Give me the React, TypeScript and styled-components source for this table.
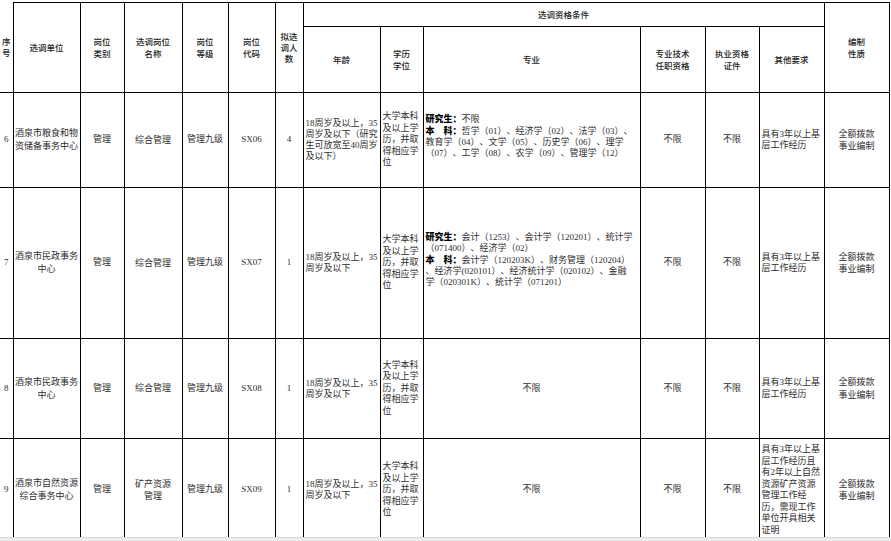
import React from "react";
import styled, { createGlobalStyle } from "styled-components";

const Global = createGlobalStyle`
  html, body { margin: 0; padding: 0; background: #fff; }
  #root { width: 891px; height: 541px; }
`;

const Page = styled.div`
  width: 891px;
  height: 541px;
  display: flex;
  flex-direction: column;
  overflow: hidden;
  background: #fff;
`;

const Viewport = styled.div`
  flex: 1;
  overflow: hidden;
  padding-top: 2px;
`;

const BottomBar = styled.div`
  height: 3px;
  flex: none;
  background: #ececec;
  border-top: 1px solid #d9d9d9;
`;

const Table = styled.table`
  border-collapse: collapse;
  table-layout: fixed;
  width: 889px;
`;

const Col = styled.col<{ $w: number }>`
  width: ${(p) => p.$w}px;
`;

const Row = styled.tr<{ $h: number }>`
  height: ${(p) => p.$h}px;
`;

const HeadCell = styled.th<{ $edge?: boolean }>`
  border: 1px solid #000;
  ${(p) => (p.$edge ? "border-left: none; border-top: none;" : "")}
  padding: 0;
  font-family: "Noto Sans CJK SC", "Noto Sans", sans-serif;
  font-weight: 500;
  font-size: 8.5px;
  line-height: 11.3px;
  color: #222;
  text-align: center;
  vertical-align: middle;
  white-space: nowrap;
  overflow: hidden;
`;

const Cell = styled.td<{ $align?: "left" | "center"; $edge?: boolean; $lh?: number; $pb?: number }>`
  border: 1px solid #000;
  ${(p) => (p.$edge ? "border-left: none;" : "")}
  padding: ${(p) => (p.$align === "left" ? "0 1px 0 2px" : "0")};
  padding-bottom: ${(p) => p.$pb ?? 0}px;
  font-family: "Liberation Serif", "Noto Sans CJK SC", serif;
  font-size: 9px;
  line-height: ${(p) => p.$lh ?? 11.4}px;
  color: #2e2e2e;
  text-align: ${(p) => p.$align ?? "center"};
  vertical-align: middle;
  white-space: nowrap;
  overflow: hidden;
  text-spacing-trim: space-all;
`;

const Label = styled.b`
  font-family: "Noto Sans CJK SC", sans-serif;
  font-weight: 900;
  color: #000;
`;

const Lines: React.FC<{ lines: React.ReactNode[] }> = ({ lines }) => (
  <>
    {lines.map((l, i) => (
      <React.Fragment key={i}>
        {i > 0 && <br />}
        {l}
      </React.Fragment>
    ))}
  </>
);

type DataRow = {
  no: string;
  unit: string[];
  type: string;
  name: string[];
  level: string;
  code: string;
  count: string;
  age: string[];
  edu: string[];
  major: React.ReactNode[] | null;
  other: string[];
  h: number;
};

const edu = ["大学本科", "及以上学", "历，并取", "得相应学", "位"];
const ageStd = ["18周岁及以上，35", "周岁及以下"];
const exp = ["具有3年以上基", "层工作经历"];

const rows: DataRow[] = [
  {
    no: "6",
    unit: ["酒泉市粮食和物", "资储备事务中心"],
    type: "管理",
    name: ["综合管理"],
    level: "管理九级",
    code: "SX06",
    count: "4",
    age: ["18周岁及以上，35", "周岁及以下（研究", "生可放宽至40周岁", "及以下）"],
    edu,
    major: [
      <><Label>研究生：</Label>不限</>,
      <><Label>本　科：</Label>哲学（01）、经济学（02）、法学（03）、</>,
      "教育学（04）、文学（05）、历史学（06）、理学",
      "（07）、工学（08）、农学（09）、管理学（12）",
    ],
    other: exp,
    h: 95,
  },
  {
    no: "7",
    unit: ["酒泉市民政事务", "中心"],
    type: "管理",
    name: ["综合管理"],
    level: "管理九级",
    code: "SX07",
    count: "1",
    age: ageStd,
    edu,
    major: [
      <><Label>研究生：</Label>会计（1253）、会计学（120201）、统计学</>,
      "（071400）、经济学（02）",
      <><Label>本　科：</Label>会计学（120203K）、财务管理（120204）</>,
      "、经济学(020101）、经济统计学（020102）、金融",
      "学（020301K）、统计学（071201）",
    ],
    other: exp,
    h: 151,
  },
  {
    no: "8",
    unit: ["酒泉市民政事务", "中心"],
    type: "管理",
    name: ["综合管理"],
    level: "管理九级",
    code: "SX08",
    count: "1",
    age: ageStd,
    edu,
    major: null,
    other: exp,
    h: 100,
  },
  {
    no: "9",
    unit: ["酒泉市自然资源", "综合事务中心"],
    type: "管理",
    name: ["矿产资源", "管理"],
    level: "管理九级",
    code: "SX09",
    count: "1",
    age: ageStd,
    edu,
    major: null,
    other: [
      "具有3年以上基",
      "层工作经历且",
      "有2年以上自然",
      "资源矿产资源",
      "管理工作经",
      "历，需现工作",
      "单位开具相关",
      "证明",
    ],
    h: 103,
  },
];

const widths = [13, 67, 44, 58, 46, 47, 28, 77, 43, 217, 65, 54, 65, 65];

export default function App() {
  return (
    <Page>
      <Global />
      <Viewport>
        <Table>
          <colgroup>
            {widths.map((w, i) => (
              <Col key={i} $w={w} />
            ))}
          </colgroup>
          <thead>
            <Row $h={24}>
              <HeadCell rowSpan={2} $edge>
                <Lines lines={["序", "号"]} />
              </HeadCell>
              <HeadCell rowSpan={2}>选调单位</HeadCell>
              <HeadCell rowSpan={2}>
                <Lines lines={["岗位", "类别"]} />
              </HeadCell>
              <HeadCell rowSpan={2}>
                <Lines lines={["选调岗位", "名称"]} />
              </HeadCell>
              <HeadCell rowSpan={2}>
                <Lines lines={["岗位", "等级"]} />
              </HeadCell>
              <HeadCell rowSpan={2}>
                <Lines lines={["岗位", "代码"]} />
              </HeadCell>
              <HeadCell rowSpan={2}>
                <Lines lines={["拟选", "调人", "数"]} />
              </HeadCell>
              <HeadCell colSpan={6}>选调资格条件</HeadCell>
              <HeadCell rowSpan={2}>
                <Lines lines={["编制", "性质"]} />
              </HeadCell>
            </Row>
            <Row $h={66}>
              <HeadCell>年龄</HeadCell>
              <HeadCell>
                <Lines lines={["学历", "学位"]} />
              </HeadCell>
              <HeadCell>专业</HeadCell>
              <HeadCell>
                <Lines lines={["专业技术", "任职资格"]} />
              </HeadCell>
              <HeadCell>
                <Lines lines={["执业资格", "证件"]} />
              </HeadCell>
              <HeadCell>其他要求</HeadCell>
            </Row>
          </thead>
          <tbody>
            {rows.map((r) => (
              <Row key={r.no} $h={r.h}>
                <Cell $edge>{r.no}</Cell>
                <Cell $lh={12.6}>
                  <Lines lines={r.unit} />
                </Cell>
                <Cell>{r.type}</Cell>
                <Cell $lh={12.4}>
                  <Lines lines={r.name} />
                </Cell>
                <Cell>{r.level}</Cell>
                <Cell>{r.code}</Cell>
                <Cell>{r.count}</Cell>
                <Cell $align="left" $lh={10.8}>
                  <Lines lines={r.age} />
                </Cell>
                <Cell $align="left" $lh={11.6}>
                  <Lines lines={r.edu} />
                </Cell>
                {r.major ? (
                  <Cell $align="left" $lh={11} $pb={8}>
                    <Lines lines={r.major} />
                  </Cell>
                ) : (
                  <Cell>不限</Cell>
                )}
                <Cell>不限</Cell>
                <Cell>不限</Cell>
                <Cell $align="left" $lh={11.5}>
                  <Lines lines={r.other} />
                </Cell>
                <Cell $lh={12.4}>
                  <Lines lines={["全额拨款", "事业编制"]} />
                </Cell>
              </Row>
            ))}
          </tbody>
        </Table>
      </Viewport>
      <BottomBar />
    </Page>
  );
}
